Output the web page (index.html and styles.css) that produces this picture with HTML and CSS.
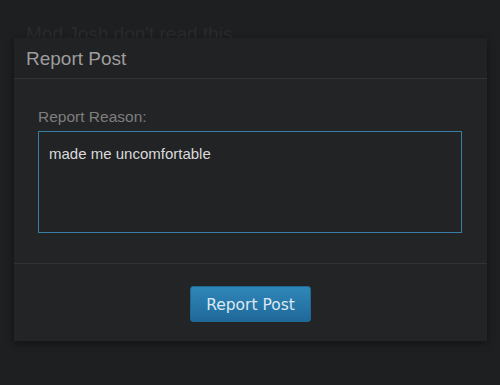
FILE: index.html
```html
<!DOCTYPE html>
<html lang="en">
<head>
    <meta charset="UTF-8">
    <meta name="viewport" content="width=device-width, initial-scale=1.0">
    <title>Report Post</title>
    <link rel="stylesheet" href="styles.css">
</head>
<body>

<div class="thread">
    <div class="post-text">Mod Josh don't read this</div>
</div>

<div class="modal">
    <div class="modal-header">
        <div class="modal-title">Report Post</div>
    </div>
    <div class="modal-body">
        <label class="field-label" for="reason">Report Reason:</label>
        <textarea id="reason" class="reason-box">made me uncomfortable</textarea>
    </div>
    <div class="modal-footer">
        <button class="btn-report">Report Post</button>
    </div>
</div>

</body>
</html>
```

FILE: styles.css
```css
body {
    margin: 0;
    height: 385px;
    overflow: hidden;
    background: #1e1f21;
    font-family: 'Liberation Sans', Arial, sans-serif;
}
.thread {
    padding: 23px 26px;
}
.post-text {
    font-size: 19px;
    color: #2a2b2e;
}
.modal {
    position: absolute;
    left: 14px;
    top: 38px;
    width: 473px;
    height: 303px;
    display: flex;
    flex-direction: column;
    background: #232426;
    box-shadow: 0px 2px 8px rgba(0,0,0,0.45);
}
.modal-header {
    height: 40px;
    padding: 0 12px;
    display: flex;
    align-items: center;
    background: #212224;
    border-bottom: 1px solid #323336;
}
.modal-title {
    font-size: 19px;
    color: #9d9d9d;
    margin-top: 2px;
}
.modal-body {
    height: 185px;
    padding: 29px 25px 0 24px;
    box-sizing: border-box;
    border-bottom: 1px solid #313235;
}
.field-label {
    display: block;
    font-size: 15.5px;
    color: #7e7e7e;
    margin-bottom: 5px;
}
.reason-box {
    display: block;
    width: 424px;
    height: 102px;
    box-sizing: border-box;
    margin: 0;
    padding: 13px 10px;
    resize: none;
    background: #222325;
    border: 1px solid #3a7ea8;
    border-radius: 0;
    outline: none;
    font-family: 'Liberation Sans', Arial, sans-serif;
    font-size: 15px;
    color: #dadada;
}
.modal-footer {
    flex: 1;
    display: flex;
    justify-content: center;
    padding-top: 22px;
}
.btn-report {
    width: 121px;
    height: 36px;
    border: 1px solid #1e6893;
    border-radius: 3px;
    background: linear-gradient(#2e87b8, #20699a);
    font-family: 'DejaVu Sans', Verdana, sans-serif;
    font-size: 15.5px;
    color: #dce9f3;
    padding: 2px 0 0;
}
```
